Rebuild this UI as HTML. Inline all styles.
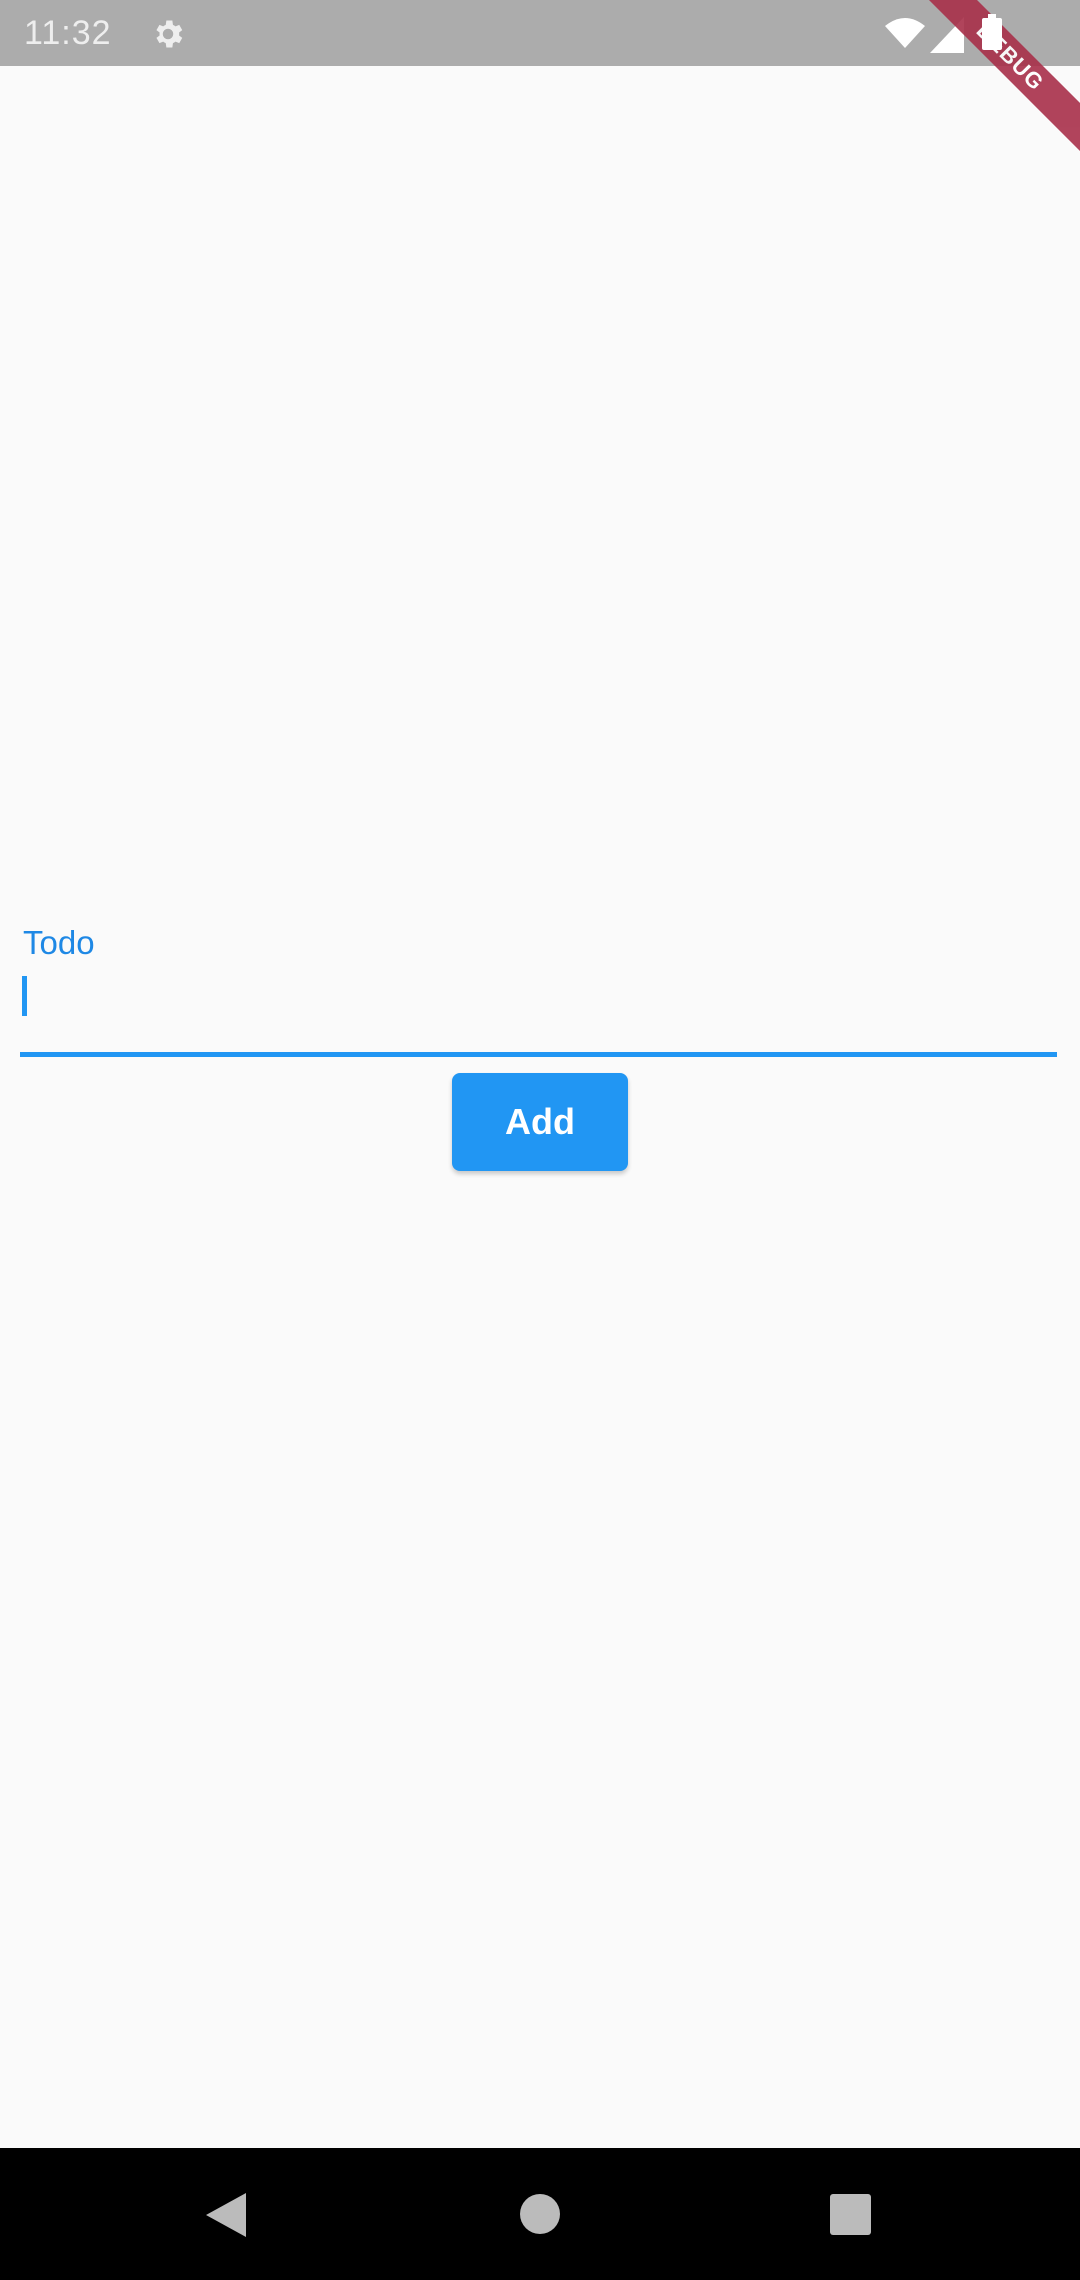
<!DOCTYPE html>
<html><head><meta charset="utf-8"><style>
html,body{margin:0;padding:0}
body{width:1080px;height:2280px;background:#fafafa;position:relative;overflow:hidden;font-family:"Liberation Sans",sans-serif}
.sb{position:absolute;left:0;top:0;width:1080px;height:66px;background:#acacac}
.time{position:absolute;left:24px;top:14px;color:#eee;font-size:34px;letter-spacing:1px}
.nav{position:absolute;left:0;top:2148px;width:1080px;height:132px;background:#000}
.banner{position:absolute;left:890px;top:40px;width:240px;height:34px;background:#a8304a;transform:rotate(45deg);transform-origin:center;color:#fff;font-weight:bold;font-size:22px;text-align:center;line-height:34px;letter-spacing:1px;opacity:.9}
</style></head><body>
<div class="sb">
<div class="time">11:32</div>
<svg style="position:absolute;left:150px;top:16px" width="36" height="36" viewBox="0 0 24 24"><path fill="#eee" d="M19.4 13a7.5 7.5 0 000-2l2.1-1.6-2-3.5-2.5 1a7 7 0 00-1.7-1L14.9 3h-4l-.4 2.9a7 7 0 00-1.7 1l-2.5-1-2 3.5L6.4 11a7.5 7.5 0 000 2l-2.1 1.6 2 3.5 2.5-1a7 7 0 001.7 1l.4 2.9h4l.4-2.9a7 7 0 001.7-1l2.5 1 2-3.5zM12 15.5a3.5 3.5 0 110-7 3.5 3.5 0 010 7z"/></svg>
<svg style="position:absolute;left:885px;top:16px" width="40" height="32" viewBox="0 0 40 32"><path fill="#fff" d="M0 10 Q20 -6 40 10 L20 32 Z"/></svg>
<svg style="position:absolute;left:930px;top:17px" width="34" height="36" viewBox="0 0 34 36"><path fill="#fff" d="M34 0 V36 H0 Z"/></svg>
</div>
<div class="banner">DEBUG</div>
<div style="position:absolute;left:982px;top:18px;width:20px;height:32px;background:#fff;border-radius:2px"></div>
<div style="position:absolute;left:988px;top:14px;width:8px;height:5px;background:#fff"></div>
<div style="position:absolute;left:23px;top:924px;font-size:33px;color:#1e88e5">Todo</div>
<div style="position:absolute;left:22px;top:976px;width:5px;height:40px;background:#2196f3"></div>
<div style="position:absolute;left:20px;top:1052px;width:1037px;height:5px;background:#2196f3"></div>
<div style="position:absolute;left:452px;top:1073px;width:176px;height:98px;background:#2196f3;border-radius:8px;box-shadow:0 3px 5px rgba(0,0,0,.2);color:#fff;font-size:36px;font-weight:bold;text-align:center;line-height:98px">Add</div>
<div class="nav">
<svg style="position:absolute;left:206px;top:45px" width="40" height="44" viewBox="0 0 40 44"><path fill="#bbb" d="M40 0 V44 L0 22 Z"/></svg>
<div style="position:absolute;left:520px;top:46px;width:40px;height:40px;border-radius:50%;background:#bbb"></div>
<div style="position:absolute;left:830px;top:46px;width:41px;height:41px;border-radius:3px;background:#bbb"></div>
</div>
</body></html>
